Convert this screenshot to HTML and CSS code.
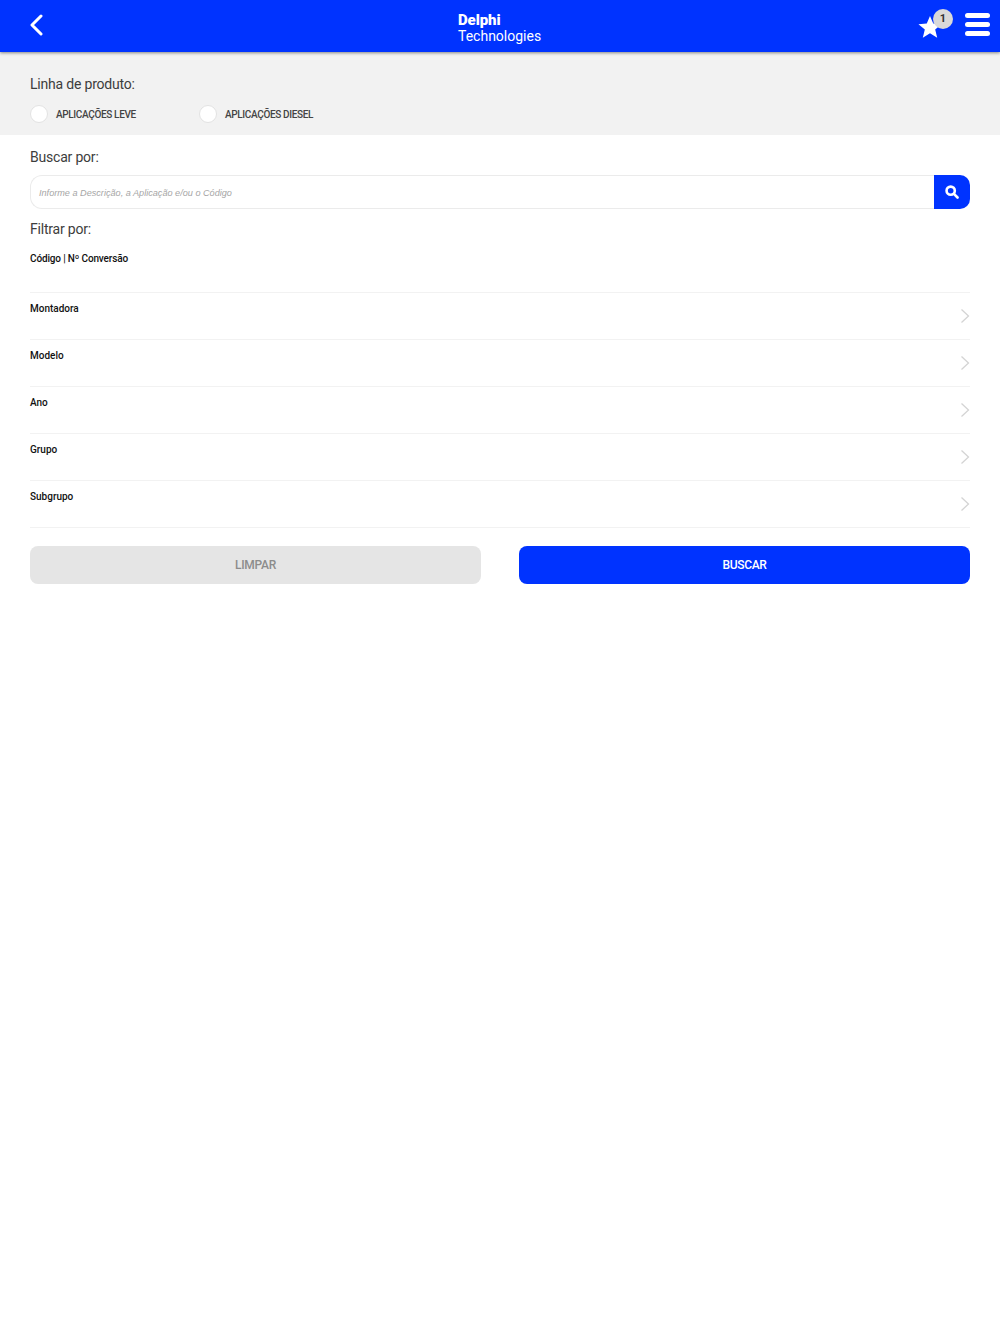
FILE: index.html
```html
<!DOCTYPE html>
<html lang="pt">
<head>
<meta charset="utf-8">
<title>Delphi Technologies</title>
<link rel="stylesheet" href="styles.css">
</head>
<body>
<header class="topbar">
  <svg class="back" width="14" height="22" viewBox="0 0 14 22"><path d="M12 2 3 11l9 9" fill="none" stroke="#fff" stroke-width="3" stroke-linecap="round" stroke-linejoin="round"/></svg>
  <div class="logo"><span class="logo-a">Delphi</span><span class="logo-b">Technologies</span></div>
  <div class="actions">
    <div class="fav">
      <svg width="24" height="24" viewBox="0 0 26 26"><path d="M13 1l3.500 8.300 9 .7-6.900 5.800 2.200 8.800L13 19.900 5.200 24.600l2.200-8.800L.5 10l9-.7z" fill="#fff"/></svg>
      <span class="badge">1</span>
    </div>
    <div class="burger"><i></i><i></i><i></i></div>
  </div>
</header>
<section class="line">
  <h2 class="heading">Linha de produto:</h2>
  <div class="radios">
    <label class="radio"><span class="dot"></span><span>APLICAÇÕES LEVE</span></label>
    <label class="radio"><span class="dot"></span><span>APLICAÇÕES DIESEL</span></label>
  </div>
</section>
<main class="content">
  <h2 class="heading">Buscar por:</h2>
  <div class="search">
    <div class="field">Informe a Descrição, a Aplicação e/ou o Código</div>
    <div class="search-btn"><svg width="14" height="14" viewBox="0 0 16 16"><circle cx="6.500" cy="6.500" r="4.700" fill="none" stroke="#fff" stroke-width="3"/><path d="M10.200 10.200 14.300 14.300" stroke="#fff" stroke-width="3" stroke-linecap="round"/></svg></div>
  </div>
  <h2 class="heading filter-title">Filtrar por:</h2>
  <div class="row row-first"><span>Código | Nº Conversão</span></div>
  <div class="row"><span>Montadora</span><svg class="chev" width="10" height="16" viewBox="0 0 10 16"><path d="M1.500 1.500 8.500 8l-7 6.500" fill="none" stroke="#d4d4d4" stroke-width="1.300"/></svg></div>
  <div class="row"><span>Modelo</span><svg class="chev" width="10" height="16" viewBox="0 0 10 16"><path d="M1.500 1.500 8.500 8l-7 6.500" fill="none" stroke="#d4d4d4" stroke-width="1.300"/></svg></div>
  <div class="row"><span>Ano</span><svg class="chev" width="10" height="16" viewBox="0 0 10 16"><path d="M1.500 1.500 8.500 8l-7 6.500" fill="none" stroke="#d4d4d4" stroke-width="1.300"/></svg></div>
  <div class="row"><span>Grupo</span><svg class="chev" width="10" height="16" viewBox="0 0 10 16"><path d="M1.500 1.500 8.500 8l-7 6.500" fill="none" stroke="#d4d4d4" stroke-width="1.300"/></svg></div>
  <div class="row"><span>Subgrupo</span><svg class="chev" width="10" height="16" viewBox="0 0 10 16"><path d="M1.500 1.500 8.500 8l-7 6.500" fill="none" stroke="#d4d4d4" stroke-width="1.300"/></svg></div>
  <div class="buttons">
    <div class="btn btn-clear">LIMPAR</div>
    <div class="btn btn-go">BUSCAR</div>
  </div>
</main>
</body>
</html>
```
FILE: styles.css
```css
* { box-sizing: border-box; }
html, body { margin: 0; padding: 0; }
body { background: #fff; font-family: Roboto, "Noto Sans", sans-serif; color: #444; min-height: 1334px; }
.topbar { height: 52px; background: #0033ff; box-shadow: 0 1px 3px rgba(0,0,0,.45); display: grid; grid-template-columns: 1fr 84px 1fr; align-items: center; padding: 0 10px; position: relative; }
.back { display: block; margin: -2px 0 0 19px; }
.logo { display: flex; flex-direction: column; color: #fff; line-height: 16px; margin-top: 4px; }
.logo-a { font-size: 15px; font-weight: 900; letter-spacing: -.1px; }
.logo-b { font-size: 14px; font-weight: 400; white-space: nowrap; }
.actions { display: flex; justify-content: flex-end; align-items: center; gap: 23px; }
.fav { position: relative; width: 24px; height: 24px; margin-top: 1px; }
.fav svg { display: block; }
.badge { position: absolute; left: 15px; top: -6px; width: 20px; height: 20px; border-radius: 50%; background: #d9d9d9; color: #333; font-size: 11px; font-weight: 700; line-height: 20px; text-align: center; }
.burger { width: 25px; display: flex; flex-direction: column; gap: 4px; margin-top: -3px; }
.burger i { display: block; height: 5px; border-radius: 3px; background: #fff; }
.heading { margin: 0; font-size: 14px; line-height: 20px; letter-spacing: -.2px; font-weight: 400; color: #3d3d3d; }
.line { height: 83px; background: #f2f2f2; padding: 22px 30px 0; }
.radios { display: flex; gap: 63px; margin-top: 11px; }
.radio { display: flex; align-items: center; gap: 8px; font-size: 10px; letter-spacing: -.35px; font-weight: 500; color: #444; width: 106px; white-space: nowrap; }
.dot { width: 18px; height: 18px; border-radius: 50%; background: #fff; border: 1px solid #e3e3e3; flex: none; }
.content { padding: 12px 30px 0; }
.search { display: flex; height: 34px; margin-top: 8px; }
.field { flex: 1; border: 1px solid #ebebeb; border-right: 0; border-radius: 12px 0 0 12px; font-family: "Liberation Sans", sans-serif; font-style: italic; font-size: 9.150px; color: #a6a6a6; padding: 0 8px; line-height: 34px; }
.search-btn { width: 36px; background: #0033ff; border-radius: 0 10px 10px 0; display: flex; align-items: center; justify-content: center; }
.filter-title { margin-top: 10px; }
.row { height: 47px; border-bottom: 1px solid #f2f2f2; display: flex; justify-content: space-between; padding-top: 9px; font-size: 10px; font-weight: 500; color: #111; line-height: 14px; }
.row-first { height: 54px; padding-top: 13px; letter-spacing: -.15px; }
.chev { margin-top: 6px; }
.buttons { display: flex; justify-content: space-between; margin-top: 18px; }
.btn { width: 451px; height: 38px; border-radius: 8px; display: flex; align-items: center; justify-content: center; font-size: 12px; letter-spacing: -.3px; font-weight: 500; }
.btn-clear { background: #e5e5e5; color: #8c8c8c; }
.btn-go { background: #0033ff; color: #fff; }
```
